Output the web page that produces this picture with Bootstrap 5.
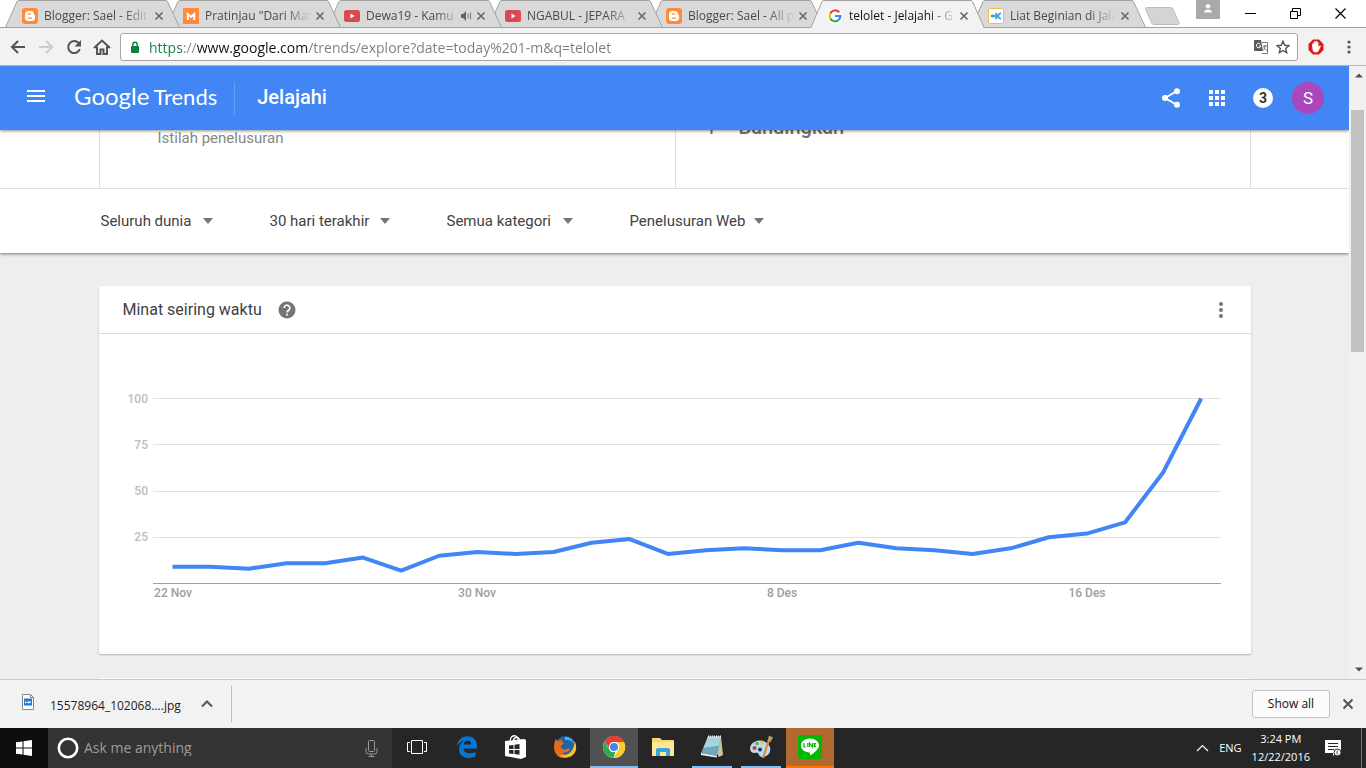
<!DOCTYPE html>
<html lang="id">
<head>
<meta charset="utf-8">
<meta name="viewport" content="width=device-width, initial-scale=1">
<title>telolet - Jelajahi - Google Trends</title>
<link href="https://cdn.jsdelivr.net/npm/bootstrap@5.3.0/dist/css/bootstrap.min.css" rel="stylesheet">
<style>
  :root { --ui: "Open Sans", "Noto Sans", sans-serif; --web: Roboto, "Liberation Sans", sans-serif; }
  body { font-family: var(--ui); font-size: 12px; line-height: 16px; background: #fff; color: #222; }
  button { background: none; border: 0; padding: 0; color: inherit; font: inherit; }
  svg { display: block; flex: none; }

  /* Tab strip */
  .tabstrip { height: 28px; padding-left: 5px; }
  .strip-line { left: 0; right: 0; bottom: 0; height: 1px; background: #a2a2a2; }
  .chrome-tab { flex: 0 1 175px; height: 28px; margin-right: -14px; padding: 3px 13px 0 17px; min-width: 60px; }
  .tab-shape { position: absolute; inset: 0; width: 100%; height: 100%; z-index: -1; fill: #d9d9d9; stroke: #a2a2a2; }
  .chrome-tab.current .tab-shape { fill: #f2f2f2; }
  .tab-title { color: #4a4a4a; text-align: left; margin-left: 6px; -webkit-mask-image: linear-gradient(90deg, #000 74%, transparent); mask-image: linear-gradient(90deg, #000 74%, transparent); }
  .current .tab-title { color: #111; }
  .tab-close { width: 16px; height: 16px; stroke: #666; }
  .profile { width: 24px; height: 19px; background: #a9a9a9; }
  .win-btn { width: 45px; height: 26px; }
  .win-btn:last-child { margin-right: 3px; }

  /* Address bar */
  .toolbar { height: 38px; background: #f2f2f2; border-bottom: 1px solid #b5b5b5; padding: 5px 8px 4px 4px; }
  .tool-btn { width: 28px; height: 28px; }
  .omnibox { height: 28px; background: #fff; border: 1px solid #a6a6a6; border-radius: 3px; padding: 0 7px 0 9px; margin: 0 10px 0 4px; }
  .url-field { border: 0; outline: 0; padding: 0; margin-left: 9px; height: 24px; font-size: 14px; color: transparent;
    background: linear-gradient(90deg, #0b8043 33px, #888 33px 48px, #111 48px 159px, #7d7d7d 159px); -webkit-background-clip: text; background-clip: text; }

  /* Page */
  .web { font-family: var(--web); background: #eee; }
  .trends-bar { height: 64px; background: #4285f4; color: #fff; padding: 0 25px 0 27px; z-index: 2; box-shadow: 0 1px 3px rgba(0,0,0,.45); }
  .logo { font-family: Lato, sans-serif; font-size: 24px; line-height: 32px; margin-left: 29px; color: #fff; }
  .logo-thin { font-size: 22px; }
  .bar-rule { width: 1px; height: 33px; background: #689df6; margin: 0 22px 0 17px; }
  .section-name { font-size: 20px; line-height: 28px; font-weight: 500; padding-top: 2px; }
  .bell { width: 20px; height: 20px; background: #fff; color: #333; font-size: 14px; font-weight: 700; margin-right: 19px; }
  .avatar { width: 32px; height: 32px; background: #ab47bc; font-size: 17px; }
  .query { margin-top: -62px; box-shadow: 0 1px 3px rgba(0,0,0,.5); }
  .frame-w { max-width: 1152px; width: 100%; }
  .term { min-height: 120px; border-left: 1px solid #dedede; }
  .term:last-child { border-right: 1px solid #dedede; }
  .term-kind { font-size: 15px; line-height: 20px; color: #868686; padding: 0 0 40px 58px; }
  .term-add { font-size: 20px; line-height: 24px; font-weight: 500; color: #707070; margin: 0 0 49px 28px; gap: 20px; }
  .filters { height: 65px; border-top: 1px solid #dedede; }
  .filter-list { gap: 57px; padding-left: 2px; }
  .picker { appearance: none; border: 0; padding: 0; font-size: 15px; line-height: 24px; height: 24px; color: #424242; border-radius: 0;
    background: url("data:image/svg+xml,%3Csvg xmlns='http://www.w3.org/2000/svg' width='10' height='6'%3E%3Cpath d='M0 0h10L5 6z' fill='%23757575'/%3E%3C/svg%3E") no-repeat right center; }
  .w-a { width: 112px; } .w-b { width: 120px; } .w-c { width: 126px; } .w-d { width: 134px; }
  .panels { padding-top: 33px; }
  .panel { background: #fff; border-radius: 2px; box-shadow: 0 1px 2px rgba(0,0,0,.25); }
  .panel-head { height: 48px; border-bottom: 1px solid #dedede; padding: 0 28px 0 24px; }
  .panel-title { font-size: 16px; line-height: 24px; font-weight: 400; color: #424242; }
  .plot { width: 100%; height: auto; }
  .plot text { font-family: var(--web); font-size: 12px; font-weight: 500; }
  .scroller { width: 17px; background: #f1f1f1; padding: 7px 2px; }
  .scroller-thumb { height: 242px; background: #c1c1c1; margin-top: 32px; }

  /* Downloads and taskbar */
  .downloads { height: 49px; background: #f2f2f2; border-top: 1px solid #c8c8c8; padding-left: 22px; padding-right: 12px; }
  .file-name { font-size: 12px; line-height: 18px; color: #222; }
  .file-menu { margin: 0 18px 0 20px; }
  .dl-rule { width: 1px; height: 36px; background: #bdbdbd; }
  .show-all { width: 78px; height: 28px; background: #fbfbfb; border: 1px solid #c4c4c4; border-radius: 3px; color: #111; }
  .taskbar { height: 40px; background: #262626; color: #fff; }
  .start { width: 48px; height: 40px; background: #0d0f0e; }
  .ask { flex: 0 1 344px; height: 40px; background: #333; padding: 0 14px 0 9px; }
  .ask-field { background: none; border: 0; outline: 0; padding: 0; margin-left: 5px; font-size: 14px; color: #a0a0a0; }
  .ask-field::placeholder { color: #9d9d9d; opacity: 1; }
  .apps { gap: 1px; }
  .app { width: 48px; height: 40px; border-bottom: 2px solid transparent; }
  .view-btn { width: 50px; }
  .app-front { background: #515151; border-color: #82bff5; }
  .app-open { background: linear-gradient(#82bff5, #82bff5) 50% 100% / 40px 2px no-repeat border-box; }
  .app-alert { background: #b2692f; border-color: #ff7400; }
  .tray { font-size: 11px; line-height: 18px; gap: 10px; }
  .notes { margin: 0 9px 0 5px; }
  .desk-edge { width: 5px; height: 40px; border-left: 1px solid #777; }
</style>
</head>
<body class="d-flex flex-column vh-100 overflow-hidden">

<svg width="0" height="0" class="position-absolute" aria-hidden="true">
  <symbol id="x" viewBox="0 0 16 16"><path d="M4.500 4.500l7 7M11.500 4.500l-7 7" stroke-width="1.600" fill="none"/></symbol>
  <symbol id="blogger" viewBox="0 0 16 16"><rect width="16" height="16" rx="3" fill="#ff8a3c"/><path fill="#fff" fill-rule="evenodd" d="M6 3h3c2 0 3 1.300 3 3 0 1 1 .6 1 1.500V10c0 2-1.300 3-3 3H6c-2 0-3-1.300-3-3V6c0-2 1.300-3 3-3zm0 2.500v1.300h3V5.500zm0 4v1.300h4V9.500z"/></symbol>
  <symbol id="tube" viewBox="0 0 16 16"><rect y="2" width="16" height="12" rx="2.500" fill="#d94a4f"/><path d="M6.500 5.500v5l4-2.500z" fill="#fff"/></symbol>
</svg>

<header>
  <div class="tabstrip d-flex position-relative">
    <div class="strip-line position-absolute"></div>
    <nav class="d-flex flex-grow-1" aria-label="Tab">
      <div class="chrome-tab position-relative d-flex align-items-center" style="z-index:7">
        <svg class="tab-shape" viewBox="0 0 175 28" preserveAspectRatio="none"><path d="M.5 27.500L12 1.500Q12.500.5 14 .5H161Q162 .5 162.500 1.500L174.500 27.500z"/></svg>
        <svg width="16" height="16"><use href="#blogger"/></svg>
        <button class="tab-title flex-grow-1 text-nowrap overflow-hidden">Blogger: Sael - Edit</button>
        <button class="tab-close" aria-label="Tutup"><svg width="16" height="16"><use href="#x"/></svg></button>
      </div>
      <div class="chrome-tab position-relative d-flex align-items-center" style="z-index:6">
        <svg class="tab-shape" viewBox="0 0 175 28" preserveAspectRatio="none"><path d="M.5 27.500L12 1.500Q12.500.5 14 .5H161Q162 .5 162.500 1.500L174.500 27.500z"/></svg>
        <svg width="16" height="16" viewBox="0 0 16 16"><rect width="16" height="16" fill="#ff8a3c"/><path d="M4.800 12V6l3.200 3 3.200-3v6" fill="none" stroke="#fff" stroke-width="2"/></svg>
        <button class="tab-title flex-grow-1 text-nowrap overflow-hidden">Pratinjau "Dari Mar</button>
        <button class="tab-close" aria-label="Tutup"><svg width="16" height="16"><use href="#x"/></svg></button>
      </div>
      <div class="chrome-tab position-relative d-flex align-items-center" style="z-index:5">
        <svg class="tab-shape" viewBox="0 0 175 28" preserveAspectRatio="none"><path d="M.5 27.500L12 1.500Q12.500.5 14 .5H161Q162 .5 162.500 1.500L174.500 27.500z"/></svg>
        <svg width="16" height="16"><use href="#tube"/></svg>
        <button class="tab-title flex-grow-1 text-nowrap overflow-hidden">Dewa19 - Kamu</button>
        <svg width="12" height="12" viewBox="0 0 12 12"><path d="M0 4h2l3-3v10L2 8H0z" fill="#666"/><path d="M7 3.500v5M9.500 2.500v7" stroke="#777"/></svg>
        <button class="tab-close" aria-label="Tutup"><svg width="16" height="16"><use href="#x"/></svg></button>
      </div>
      <div class="chrome-tab position-relative d-flex align-items-center" style="z-index:4">
        <svg class="tab-shape" viewBox="0 0 175 28" preserveAspectRatio="none"><path d="M.5 27.500L12 1.500Q12.500.5 14 .5H161Q162 .5 162.500 1.500L174.500 27.500z"/></svg>
        <svg width="16" height="16"><use href="#tube"/></svg>
        <button class="tab-title flex-grow-1 text-nowrap overflow-hidden">NGABUL - JEPARA</button>
        <button class="tab-close" aria-label="Tutup"><svg width="16" height="16"><use href="#x"/></svg></button>
      </div>
      <div class="chrome-tab position-relative d-flex align-items-center" style="z-index:3">
        <svg class="tab-shape" viewBox="0 0 175 28" preserveAspectRatio="none"><path d="M.5 27.500L12 1.500Q12.500.5 14 .5H161Q162 .5 162.500 1.500L174.500 27.500z"/></svg>
        <svg width="16" height="16"><use href="#blogger"/></svg>
        <button class="tab-title flex-grow-1 text-nowrap overflow-hidden">Blogger: Sael - All p</button>
        <button class="tab-close" aria-label="Tutup"><svg width="16" height="16"><use href="#x"/></svg></button>
      </div>
      <div class="chrome-tab current position-relative d-flex align-items-center" style="z-index:8">
        <svg class="tab-shape" viewBox="0 0 175 28" preserveAspectRatio="none"><path d="M.5 28.500L12 1.500Q12.500.5 14 .5H161Q162 .5 162.500 1.500L174.500 28.500"/></svg>
        <svg width="16" height="16" viewBox="0 0 16 16"><circle cx="8" cy="8" r="8" fill="#fff"/><g fill="none" stroke-width="2.200"><path d="M12.200 4.300A5.400 5.400 0 0 0 3.200 5.600" stroke="#ea4335"/><path d="M3.200 5.600A5.400 5.400 0 0 0 3.300 10.600" stroke="#fbbc05"/><path d="M3.300 10.600A5.400 5.400 0 0 0 11.500 12" stroke="#34a853"/><path d="M11.500 12A5.400 5.400 0 0 0 13.400 8H8" stroke="#4285f4"/></g></svg>
        <button class="tab-title flex-grow-1 text-nowrap overflow-hidden" aria-current="page">telolet - Jelajahi - G</button>
        <button class="tab-close" aria-label="Tutup"><svg width="16" height="16"><use href="#x"/></svg></button>
      </div>
      <div class="chrome-tab position-relative d-flex align-items-center" style="z-index:2">
        <svg class="tab-shape" viewBox="0 0 175 28" preserveAspectRatio="none"><path d="M.5 27.500L12 1.500Q12.500.5 14 .5H161Q162 .5 162.500 1.500L174.500 27.500z"/></svg>
        <svg width="16" height="16" viewBox="0 0 16 16"><rect x=".5" y=".5" width="15" height="15" rx="1" fill="#fff" stroke="#f6b84a"/><path d="M3 8h4M8.200 4.800v6.400M12.800 4.800L9.200 8l3.600 3.200M4.500 6.500v3" stroke="#3a9ad9" stroke-width="1.800" fill="none"/></svg>
        <button class="tab-title flex-grow-1 text-nowrap overflow-hidden">Liat Beginian di Jala</button>
        <button class="tab-close" aria-label="Tutup"><svg width="16" height="16"><use href="#x"/></svg></button>
      </div>
      <button class="ms-2 ps-1 pt-1" aria-label="Tab baru"><svg width="36" height="19" viewBox="0 0 36 19"><path d="M2.500.5H26Q28 .5 29 2L35 15.500Q35.500 17.500 33.500 17.500H10Q8.500 17.500 8 16.500L1.500 2Q1.200.5 2.500.5z" fill="#d4d4d4" stroke="#bcbcbc"/></svg></button>
    </nav>
    <button class="profile d-flex justify-content-center pt-1 me-2" aria-label="Profil"><svg width="10" height="9" viewBox="0 0 10 9"><circle cx="5" cy="2.200" r="2.200" fill="#fff"/><path d="M1 8.500c0-4 8-4 8 0z" fill="#fff"/></svg></button>
    <button class="win-btn d-flex align-items-center justify-content-center" aria-label="Minimize"><svg width="11" height="11"><path d="M0 5.500h11" stroke="#000"/></svg></button>
    <button class="win-btn d-flex align-items-center justify-content-center" aria-label="Restore"><svg width="11" height="11"><path d="M.5 3.500h7v7h-7zM2.500 3V.5h8v7H8" fill="none" stroke="#000"/></svg></button>
    <button class="win-btn d-flex align-items-center justify-content-center" aria-label="Close"><svg width="11" height="11"><path d="M.5.5l10 10M10.500.5l-10 10" stroke="#000" stroke-width="1.200"/></svg></button>
  </div>

  <div class="toolbar d-flex align-items-center">
    <button class="tool-btn d-flex align-items-center justify-content-center" aria-label="Back"><svg width="16" height="16" viewBox="0 0 16 16" fill="none" stroke="#555" stroke-width="2"><path d="M15 8H2.500M8 2L2 8l6 6"/></svg></button>
    <button class="tool-btn d-flex align-items-center justify-content-center" aria-label="Forward"><svg width="16" height="16" viewBox="0 0 16 16" fill="none" stroke="#ccc" stroke-width="2"><path d="M1 8h12.500M8 2l6 6-6 6"/></svg></button>
    <button class="tool-btn d-flex align-items-center justify-content-center" aria-label="Reload"><svg width="16" height="16" viewBox="0 0 16 16"><path d="M13.800 10.200A6 6 0 1 1 12.600 4" fill="none" stroke="#555" stroke-width="2"/><path d="M15 1v6.500H8.500z" fill="#555"/></svg></button>
    <button class="tool-btn d-flex align-items-center justify-content-center" aria-label="Home"><svg width="18" height="16" viewBox="0 0 18 16" fill="none" stroke="#555" stroke-width="2"><path d="M1 9L9 1.500 17 9M4 7.500V15h3.500v-4.500h3V15H14V7.500"/></svg></button>
    <div class="omnibox flex-grow-1 d-flex align-items-center">
      <svg width="10" height="13" viewBox="0 0 10 13"><rect x="1" y="5" width="8" height="7" rx="1" fill="#0b8043"/><path d="M2.800 5.500V3.500a2.200 2.200 0 0 1 4.400 0v2" fill="none" stroke="#0b8043" stroke-width="1.400"/></svg>
      <input class="url-field flex-grow-1" type="text" aria-label="Alamat" value="https://www.google.com/trends/explore?date=today%201-m&amp;q=telolet">
      <button class="me-2" aria-label="Translate"><svg width="14" height="14" viewBox="0 0 14 14"><path d="M1 0h6l2 11H1a1 1 0 0 1-1-1V1a1 1 0 0 1 1-1z" fill="#5a5a5a"/><path d="M6.200 4a2.200 2.200 0 1 0 .6 2H4.800" stroke="#fff" fill="none"/><path d="M8 2.500h5.500v11H7.800M9 6h4M11 5v1c0 2-1 3.500-2 4.500M9.800 7c.5 1.500 1.500 2.500 3 3.500" fill="none" stroke="#777"/></svg></button>
      <button aria-label="Bookmark"><svg width="14" height="14" viewBox="0 0 14 14"><path d="M7 1.300l1.700 4 4.300.4-3.300 2.800 1 4.200L7 10.500l-3.700 2.200 1-4.200L1 5.700l4.300-.4z" fill="none" stroke="#555" stroke-width="1.400"/></svg></button>
    </div>
    <button class="me-3" aria-label="Adblock"><svg width="16" height="16" viewBox="0 0 16 16"><path d="M5 .5h6L15.500 5v6L11 15.500H5L.5 11V5z" fill="#e3171b"/><path d="M4.200 8V5c0-.9 1.500-.9 1.500 0V3.200c0-1 1.600-1 1.600 0v-.8c0-1 1.600-1 1.600 0v1c0-.9 1.500-.9 1.500 0V8l1-1.200c.9-.7 1.700.1 1.200 1L10.500 12c-.9 1.700-4.500 2-5.600 0z" fill="#fff"/></svg></button>
    <button class="ms-1 me-1" aria-label="Menu"><svg width="10" height="16" viewBox="0 0 10 16" fill="#555"><circle cx="5" cy="3" r="1.600"/><circle cx="5" cy="8" r="1.600"/><circle cx="5" cy="13" r="1.600"/></svg></button>
  </div>
</header>

<div class="d-flex flex-grow-1 overflow-hidden">
  <div class="web flex-grow-1 overflow-hidden">
    <header class="trends-bar d-flex align-items-center position-relative">
      <div class="d-flex align-items-center pb-1">
        <button aria-label="Menu utama"><svg width="18" height="14" viewBox="0 0 18 14"><path d="M0 2h18M0 7h18M0 12h18" stroke="#fff" stroke-width="2"/></svg></button>
        <a class="logo text-decoration-none text-nowrap" href="#">Google<span class="logo-thin ms-1">Trends</span></a>
        <div class="bar-rule mt-1"></div>
        <div class="section-name">Jelajahi</div>
      </div>
      <div class="ms-auto d-flex align-items-center">
        <button aria-label="Bagikan"><svg width="20" height="20" viewBox="0 0 20 20"><path d="M16 3L4 10l12 7" fill="none" stroke="#fff" stroke-width="2"/><g fill="#fff"><circle cx="16" cy="3.200" r="3"/><circle cx="4" cy="10" r="3"/><circle cx="16" cy="16.800" r="3"/></g></svg></button>
        <button class="mx-4 px-1" aria-label="Aplikasi"><svg width="16" height="16" fill="#fff"><path d="M0 0h4v4H0zM6 0h4v4H6zM12 0h4v4h-4zM0 6h4v4H0zM6 6h4v4H6zM12 6h4v4h-4zM0 12h4v4H0zM6 12h4v4H6zM12 12h4v4h-4z"/></svg></button>
        <button class="bell rounded-circle d-flex align-items-center justify-content-center">3</button>
        <button class="avatar rounded-circle d-flex align-items-center justify-content-center">S</button>
      </div>
    </header>

    <section class="query bg-white position-relative">
      <div class="frame-w mx-auto d-flex">
        <div class="term w-50 d-flex align-items-end"><div class="term-kind">Istilah penelusuran</div></div>
        <div class="term w-50 d-flex align-items-end">
          <button class="term-add d-flex align-items-center"><svg width="15" height="14" viewBox="0 0 15 14" ><path d="M7.500 0v14M0 7h15" stroke="#707070" stroke-width="2"/></svg>Bandingkan</button>
        </div>
      </div>
      <div class="filters d-flex align-items-center">
        <div class="frame-w mx-auto"><div class="filter-list d-flex">
          <select class="picker w-a" aria-label="Wilayah"><option>Seluruh dunia</option></select>
          <select class="picker w-b" aria-label="Rentang waktu"><option>30 hari terakhir</option></select>
          <select class="picker w-c" aria-label="Kategori"><option>Semua kategori</option></select>
          <select class="picker w-d" aria-label="Jenis penelusuran"><option>Penelusuran Web</option></select>
        </div></div>
      </div>
    </section>

    <main class="panels frame-w mx-auto d-flex flex-column gap-4">
      <section class="panel">
        <div class="panel-head d-flex align-items-center">
          <h2 class="panel-title m-0">Minat seiring waktu</h2>
          <button class="ms-3" aria-label="Bantuan"><svg width="18" height="18" viewBox="0 0 18 18"><circle cx="9" cy="9" r="8.500" fill="#757575"/><path d="M6.200 7a2.800 2.800 0 1 1 4.600 2.100C9.700 10 9 10.300 9 11.600" fill="none" stroke="#fff" stroke-width="1.700"/><path d="M8.100 12.800h1.800v1.800H8.100z" fill="#fff"/></svg></button>
          <button class="ms-auto" aria-label="Opsi"><svg width="4" height="16" fill="#757575"><circle cx="2" cy="2" r="2"/><circle cx="2" cy="8" r="2"/><circle cx="2" cy="14" r="2"/></svg></button>
        </div>
        <svg class="plot" viewBox="0 0 1152 320" role="img" aria-label="Minat seiring waktu">
          <path d="M54 64.500H1122M54 110.500H1122M54 157.500H1122M54 203.500H1122" stroke="#e0e0e0"/>
          <path d="M54 249.500H1122" stroke="#9e9e9e"/>
          <g text-anchor="end" fill="#bdbdbd"><text x="49" y="69">100</text><text x="49" y="115">75</text><text x="49" y="161">50</text><text x="49" y="207">25</text></g>
          <g text-anchor="middle" fill="#9e9e9e"><text x="74" y="263">22 Nov</text><text x="378" y="263">30 Nov</text><text x="683" y="263">8 Des</text><text x="988" y="263">16 Des</text></g>
          <polyline id="trend" fill="none" stroke="#4285f4" stroke-width="4" stroke-linejoin="round"/>
        </svg>
      </section>
      <section class="panel pt-5"></section>
    </main>
  </div>
  <div class="scroller d-flex flex-column" aria-hidden="true">
    <svg class="ms-1" width="8" height="5"><path d="M0 4.500L4 .5l4 4z" fill="#505050"/></svg>
    <div class="scroller-thumb"></div>
    <svg class="mt-auto ms-1" width="8" height="5"><path d="M0 .5h8l-4 4z" fill="#505050"/></svg>
  </div>
</div>

<footer>
  <div class="downloads d-flex align-items-center">
    <svg class="mb-1" width="12" height="16" viewBox="0 0 12 16"><path d="M.5.5h8l3 3v12H.5z" fill="#fff" stroke="#888"/><path d="M8.500.5v3h3" fill="none" stroke="#888"/><rect x="2" y="4.500" width="8" height="7" fill="#1a7ddb"/><path d="M3 9.500V7l2 1.500L6.500 7 8 8l1-1v1.500l-2.500 1L5 8.500z" fill="#fff"/></svg>
    <button class="file-name ms-3 pt-1">15578964_102068....jpg</button>
    <button class="file-menu" aria-label="Opsi unduhan"><svg width="12" height="8"><path d="M1 6.500l5-5 5 5" fill="none" stroke="#555" stroke-width="2"/></svg></button>
    <div class="dl-rule"></div>
    <button class="show-all ms-auto me-2">Show all</button>
    <button class="ms-1" aria-label="Tutup bilah unduhan"><svg width="12" height="12"><path d="M1.500 1.500l9 9M10.500 1.500l-9 9" stroke="#555" stroke-width="2"/></svg></button>
  </div>

  <div class="taskbar d-flex align-items-center">
    <button class="start d-flex align-items-center justify-content-center" aria-label="Start"><svg width="16" height="16" viewBox="0 0 16 16" fill="#fff"><path d="M0 2.300L6.500 1.400v6.100H0zM7.500 1.200L16 0v7.500H7.500zM0 8.500h6.500v6.100L0 13.700zM7.500 8.500H16V16l-8.500-1.200z"/></svg></button>
    <div class="ask d-flex align-items-center">
      <svg width="22" height="22"><circle cx="11" cy="11" r="9.200" fill="none" stroke="#fff" stroke-width="2.600"/></svg>
      <input class="ask-field flex-grow-1" type="text" aria-label="Cari" placeholder="Ask me anything">
      <button aria-label="Mikrofon"><svg width="13" height="17" viewBox="0 0 13 17" fill="none" stroke="#999"><rect x="3.500" y=".5" width="6" height="11" rx="1"/><path d="M1 8v3.500Q1 14 3.500 14h6Q12 14 12 11.500V8M6.500 14v2.500M3.500 16.500h6"/></svg></button>
    </div>
    <div class="apps d-flex">
      <button class="app view-btn d-flex align-items-center justify-content-center" aria-label="Task view"><svg width="20" height="14" fill="none" stroke="#fff"><path d="M4.500.5h11v13h-11zM3 2.500H.5v9H3M17 2.500h2.500v9H17"/></svg></button>
      <button class="app d-flex align-items-center justify-content-center" aria-label="Edge"><svg width="20" height="22" viewBox="0 0 20 22"><path d="M0 10C.8 4 4.800.3 10.300.3c6 0 9.700 4.200 9.700 9.700v2.400H6.600c.2 3.400 3 4.800 6.200 4.800 2.200 0 4-.5 5.700-1.500v4.600c-2 1.100-4.200 1.600-6.900 1.600C5.700 21.900 2 18.300 2 13c0-4 2.200-7 5.500-8.600C4.500 4.800 1.700 6.800 0 10zm6.800-1.500h7.300c0-2.500-1.200-4-3.500-4S7.200 6 6.800 8.500z" fill="#0078d7"/></svg></button>
      <button class="app d-flex align-items-center justify-content-center" aria-label="Store"><svg width="22" height="24" viewBox="0 0 22 24"><path d="M0 6l19-2 2 1v17l-5 2L0 21z" fill="#fff"/><path d="M5 6.500C5 2 8 .5 10 .8c2 .3 3 2 3 4.500M8 6C9 2 13 1 15 5" fill="none" stroke="#fff" stroke-width="1.300"/><path d="M4 10.500l4.500-.6v4H4zM9.500 9.800l5-.7v4.800h-5zM4 15h4.500v4L4 18.500zM9.500 15h5v4.700l-5-.6z" fill="#262626"/></svg></button>
      <button class="app d-flex align-items-center justify-content-center" aria-label="Firefox"><svg width="24" height="24" viewBox="0 0 24 24"><circle cx="12.500" cy="11.500" r="10.500" fill="#1b65a8"/><path d="M12 2c5 0 8 3 9 7-2-3-5-5-9-4z" fill="#5eb6e8"/><path d="M2.500 4c1 1.500 2 2 3.500 2C7 5 8.500 4.500 9.500 4.500 8.500 6 9 7 11 8c-1 2-3 2-3 3.500 0 2 2 3.500 4.500 3 2-.4 3-1.500 4.500-.5-1 3-5 4.500-8 3 3 4 8 3.500 11 0-2 5-6 6-9 6C5 23 1 18 1 12.500 1 9.500 1.500 6.500 2.500 4z" fill="#e66a1b"/><path d="M21.500 6c3 6 2 12-3 15-5 2.500-10 1.500-13-1.500 5 2 10 .500 13-3.500 2-2.800 3-6 3-10z" fill="#fbc02d"/></svg></button>
      <button class="app app-front d-flex align-items-center justify-content-center" aria-label="Chrome" aria-current="true"><svg width="24" height="24" viewBox="0 0 24 24"><circle cx="12" cy="12" r="11" fill="#fff"/><path d="M2.500 6.500A11 11 0 0 1 22 7H12a5 5 0 0 0-4.500 7z" fill="#e34133"/><path d="M22 7a11 11 0 0 1-10.500 16l4.800-8.500A5 5 0 0 0 12 7z" fill="#fbcb2d"/><path d="M2.500 6.500l5 8.200a5 5 0 0 0 6 2.100L11.500 23A11 11 0 0 1 2.500 6.500z" fill="#2da94f"/><circle cx="12" cy="12" r="5" fill="#fff"/><circle cx="12" cy="12" r="4" fill="#4285f4"/></svg></button>
      <button class="app d-flex align-items-center justify-content-center" aria-label="Explorer"><svg width="22" height="20" viewBox="0 0 22 20"><path d="M0 1h8l2 2h12v16H0z" fill="#f9d56e"/><path d="M0 5h22v14H0z" fill="#ffe79a"/><path d="M4 19v-7l2-1h10l2 1v7h-4v-4H8v4z" fill="#35a5e3"/></svg></button>
      <button class="app app-open d-flex align-items-center justify-content-center" aria-label="Notepad"><svg width="24" height="24" viewBox="0 0 24 24"><path d="M7 2h14l2 18-4 2z" fill="#c9c19a"/><path d="M8 1.500h13L17 21 1 18z" fill="#6fa9b9"/><path d="M8 1.500h13l-2 9L3.500 13z" fill="#a9d3dc"/><path d="M1 18l16 3-.5 1.500L1 20z" fill="#edf6f7"/><path d="M8 1.500h13" stroke="#eee" stroke-width="2" stroke-dasharray="1 1"/></svg></button>
      <button class="app app-open d-flex align-items-center justify-content-center" aria-label="Paint"><svg width="24" height="24" viewBox="0 0 24 24"><path d="M2 10C5 5 13 4 18 8c5 4 4 11-1 13-3 2-6 1-7-1-1-3-2-2-4-2-5 0-6-4-4-8z" fill="#b9dcf4"/><circle cx="5.500" cy="13" r="2" fill="#d33"/><circle cx="8" cy="8.500" r="1.800" fill="#55b54a"/><circle cx="13" cy="7.500" r="2" fill="#f7c52e"/><circle cx="11" cy="14.500" r="2" fill="#243a5a"/><path d="M20 5l-6 18" stroke="#e78a2b" stroke-width="2.200"/><path d="M18.500 6L20 .5l4 2-2.500 4.500z" fill="#c19a6b"/></svg></button>
      <button class="app app-alert d-flex align-items-center justify-content-center" aria-label="LINE"><svg width="24" height="24" viewBox="0 0 24 24"><rect width="24" height="24" rx="3" fill="#00b900"/><path d="M12 3.500c5 0 9 3.100 9 7 0 3.500-5 7.500-9 10 0-1 .3-2.500-.5-3C6.500 17.200 3 14.300 3 10.500c0-3.900 4-7 9-7z" fill="#fff"/><path d="M6 8v4h2M9.800 8v4M11.500 12V8l3 4V8M18 8.500h-1.700v3H18M16.300 10H18" fill="none" stroke="#00b900" stroke-width="1.200"/></svg></button>
    </div>
    <div class="tray ms-auto d-flex align-items-center">
      <button aria-label="Ikon tersembunyi"><svg width="13" height="8"><path d="M1 7l5.500-5.500L12 7" fill="none" stroke="#fff" stroke-width="1.200"/></svg></button>
      <button>ENG</button>
      <button class="text-center">3:24 PM<br>12/22/2016</button>
      <button class="notes" aria-label="Notifikasi"><svg width="17" height="17" viewBox="0 0 17 17"><path d="M0 0h16v13h-5l-3 3v-3H0z" fill="#fff"/><path d="M3 3.500h10M3 6.500h10M3 9.500h6" stroke="#262626"/><circle cx="12.500" cy="12.500" r="3.500" fill="#fff" stroke="#262626"/><path d="M13 10.500a2.500 2.500 0 0 0 0 4" fill="none" stroke="#262626"/></svg></button>
      <div class="desk-edge"></div>
    </div>
  </div>
</footer>

<script>
  // Daily interest from 22 November; the axis runs from 0 (y 249) to 100 (y 64).
  const interest = [9,9,8,11,11,14,7,15,17,16,17,22,24,16,18,19,18,18,22,19,18,16,19,25,27,33,60,100];
  document.getElementById('trend').setAttribute('points',
    interest.map((v, i) => `${73.5 + i * 38.1},${249.5 - v * 1.85}`).join(' '));
</script>
<script src="https://cdn.jsdelivr.net/npm/bootstrap@5.3.0/dist/js/bootstrap.bundle.min.js"></script>
</body>
</html>
